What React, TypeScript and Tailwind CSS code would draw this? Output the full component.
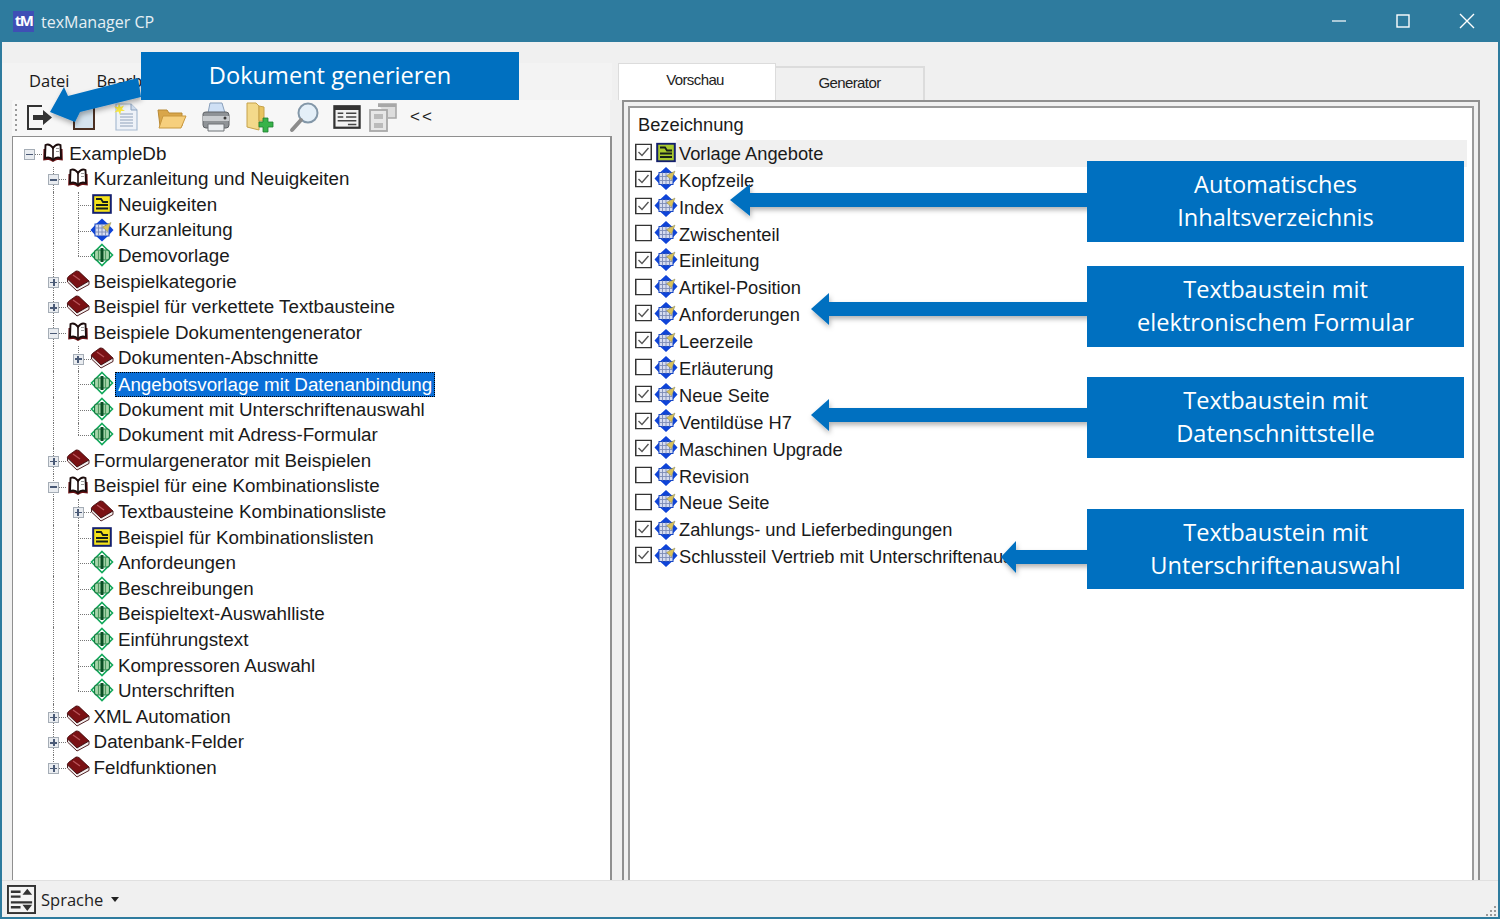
import React from "react";

const OpenBook = () => (
  <svg width="22" height="20" viewBox="0 0 22 20" className="shrink-0">
    <path d="M1.5 6 L1.2 17.5 C5 16.5 8 16.5 11 19 C14 16.5 17 16.5 20.8 17.5 L20.5 6Z" fill="#6a1215" />
    <path d="M11 5 C8.5 1.5 5.5 1 3.5 2 L3 15 C6 14 9 14.5 11 16.8 C13 14.5 16 14 19 15 L18.5 2 C16.5 1 13.5 1.5 11 5Z" fill="#fff" stroke="#1c0c0c" strokeWidth="1.9" />
    <path d="M11 5V17" stroke="#1c0c0c" strokeWidth="1.6" />
    <path d="M14 5.5H17M14 8.5H17" stroke="#9a9a9a" strokeWidth="1" />
  </svg>
);
const ClosedBook = () => (
  <svg width="24" height="22" viewBox="0 0 24 22" className="shrink-0">
    <path d="M10 1 C11 0.8 12 1 13 1.6 L23 11 L11 18 L1.5 9 C1 8 2 7 3 6Z" fill="#7a1114" stroke="#3d0a0c" strokeWidth="0.8" />
    <path d="M1.5 9 L1.5 12 L11 21 L23 14.5 L23 11 L11 18Z" fill="#f4efef" stroke="#3d0a0c" strokeWidth="0.9" />
    <path d="M7 5L14 10" stroke="#b9545a" strokeWidth="1.3" />
  </svg>
);
const YellowDoc = ({ green = false }: { green?: boolean }) => (
  <svg width="20" height="20" viewBox="0 0 20 20" className="shrink-0">
    <rect x="1.2" y="1.2" width="17.6" height="17.6" fill={green ? "#a8c92e" : "#f4e21a"} stroke="#14206e" strokeWidth="2" />
    <path d="M4 5H9L11 8H16M4 11H16M4 14.5H16" stroke="#15201a" strokeWidth="1.8" fill="none" />
  </svg>
);
const BlueDoc = () => (
  <svg width="24" height="24" viewBox="0 0 24 24" className="shrink-0">
    <path d="M12 0.5 L18 6 H6Z M12 23.5 L18 18 H6Z M0.5 12 L6 6 V18Z M23.5 12 L18 6 V18Z" fill="#0f44d8" />
    <rect x="5" y="6" width="14" height="12" fill="#d6dcf0" stroke="#1746c4" strokeWidth="1" />
    <path d="M8.5 6V18M12 6V18M15.5 6V18M5 10H19M5 14H19" stroke="#7d8bb5" strokeWidth="0.9" />
    <path d="M12.5 9 L21 4.5 L17.5 13.5Z" fill="#d9c25c" stroke="#8a8a5a" strokeWidth="0.5" />
  </svg>
);
const GreenDoc = () => (
  <svg width="24" height="24" viewBox="0 0 24 24" className="shrink-0">
    <path d="M12 1.5 L22.5 12 L12 22.5 L1.5 12Z" fill="#fff" stroke="#12a85a" strokeWidth="1.6" />
    <rect x="4.5" y="7" width="15" height="10" rx="2.5" fill="#a7d6ab" stroke="#157a40" strokeWidth="1.2" />
    <path d="M8.5 7V17M15.5 7V17" stroke="#4f9a62" strokeWidth="1.2" />
    <path d="M12 5V19" stroke="#0a4f24" strokeWidth="3" />
  </svg>
);

type Kind = "open" | "closed" | "yellow" | "blue" | "green";
type TreeNode = { t: string; d: 0 | 1 | 2; k: Kind; exp?: "+" | "-"; last?: boolean; sel?: boolean; lastOuter?: boolean };

const tree: TreeNode[] = [
  { t: "ExampleDb", d: 0, k: "open", exp: "-" },
  { t: "Kurzanleitung und Neuigkeiten", d: 1, k: "open", exp: "-" },
  { t: "Neuigkeiten", d: 2, k: "yellow" },
  { t: "Kurzanleitung", d: 2, k: "blue" },
  { t: "Demovorlage", d: 2, k: "green", last: true },
  { t: "Beispielkategorie", d: 1, k: "closed", exp: "+" },
  { t: "Beispiel für verkettete Textbausteine", d: 1, k: "closed", exp: "+" },
  { t: "Beispiele Dokumentengenerator", d: 1, k: "open", exp: "-" },
  { t: "Dokumenten-Abschnitte", d: 2, k: "closed", exp: "+" },
  { t: "Angebotsvorlage mit Datenanbindung", d: 2, k: "green", sel: true },
  { t: "Dokument mit Unterschriftenauswahl", d: 2, k: "green" },
  { t: "Dokument mit Adress-Formular", d: 2, k: "green", last: true },
  { t: "Formulargenerator mit Beispielen", d: 1, k: "closed", exp: "+" },
  { t: "Beispiel für eine Kombinationsliste", d: 1, k: "open", exp: "-" },
  { t: "Textbausteine Kombinationsliste", d: 2, k: "closed", exp: "+" },
  { t: "Beispiel für Kombinationslisten", d: 2, k: "yellow" },
  { t: "Anfordeungen", d: 2, k: "green" },
  { t: "Beschreibungen", d: 2, k: "green" },
  { t: "Beispieltext-Auswahlliste", d: 2, k: "green" },
  { t: "Einführungstext", d: 2, k: "green" },
  { t: "Kompressoren Auswahl", d: 2, k: "green" },
  { t: "Unterschriften", d: 2, k: "green", last: true },
  { t: "XML Automation", d: 1, k: "closed", exp: "+" },
  { t: "Datenbank-Felder", d: 1, k: "closed", exp: "+" },
  { t: "Feldfunktionen", d: 1, k: "closed", exp: "+", lastOuter: true },
];

const Icon = ({ k }: { k: Kind }) =>
  k === "open" ? <OpenBook /> : k === "closed" ? <ClosedBook /> : k === "yellow" ? <YellowDoc /> : k === "blue" ? <BlueDoc /> : <GreenDoc />;

const VLine = ({ half = false }: { half?: boolean }) => (
  <span className={`absolute left-1/2 top-0 w-0 border-l border-dotted border-[#777] ${half ? "h-1/2" : "h-full"}`} />
);
const HLine = () => <span className="absolute left-1/2 top-1/2 w-[13px] h-0 border-t border-dotted border-[#777]" />;

const Expander = ({ s }: { s: "+" | "-" }) => (
  <span className="absolute left-1/2 top-1/2 -ml-[5px] -mt-[5px] w-[11px] h-[11px] border border-[#a5adb6] bg-[#e9ecf0] flex items-center justify-center z-10">
    <span className="relative block w-[7px] h-[1.5px] bg-[#4a5a76]">
      {s === "+" && <span className="absolute left-[2.75px] -top-[2.75px] w-[1.5px] h-[7px] bg-[#4a5a76]" />}
    </span>
  </span>
);

const Cell = ({ children }: { children?: React.ReactNode }) => (
  <span className="relative block w-[24.3px] h-full shrink-0">{children}</span>
);

const TreeRow = ({ n }: { n: TreeNode }) => (
  <div className="flex items-center h-[25.6px]">
    {n.d === 0 && (
      <Cell>
        <HLine />
        <Expander s="-" />
      </Cell>
    )}
    {n.d === 1 && (
      <>
        <Cell />
        <Cell>
          <VLine half={n.lastOuter} />
          <HLine />
          {n.exp && <Expander s={n.exp} />}
        </Cell>
      </>
    )}
    {n.d === 2 && (
      <>
        <Cell />
        <Cell>
          <VLine />
        </Cell>
        <Cell>
          <VLine half={n.last} />
          <HLine />
          {n.exp && <Expander s={n.exp} />}
        </Cell>
      </>
    )}
    <span className="w-[24px] flex items-center justify-center shrink-0 relative z-10 -translate-y-[1px]">
      <Icon k={n.k} />
    </span>
    <span
      className={
        n.sel
          ? "ml-[1px] px-[2px] h-[25px] leading-[23px] bg-[#0a6fd8] text-white border border-dotted border-black whitespace-nowrap"
          : "ml-[4px] text-[#1a1a1a] whitespace-nowrap"
      }
    >
      {n.t}
    </span>
  </div>
);

const list: [string, boolean][] = [
  ["Kopfzeile", true],
  ["Index", true],
  ["Zwischenteil", false],
  ["Einleitung", true],
  ["Artikel-Position", false],
  ["Anforderungen", true],
  ["Leerzeile", true],
  ["Erläuterung", false],
  ["Neue Seite", true],
  ["Ventildüse H7", true],
  ["Maschinen Upgrade", true],
  ["Revision", false],
  ["Neue Seite", false],
  ["Zahlungs- und Lieferbedingungen", true],
  ["Schlussteil Vertrieb mit Unterschriftenauswahl", true],
];

const Check = ({ on }: { on: boolean }) => (
  <svg width="17" height="17" viewBox="0 0 17 17" className="shrink-0 -translate-y-[1.5px]">
    <rect x="0.75" y="0.75" width="15.5" height="15.5" fill="#fff" stroke="#333" strokeWidth="1.5" />
    {on && <path d="M3.5 8.5 L7 12 L13.5 4.5" fill="none" stroke="#555" strokeWidth="1.4" />}
  </svg>
);

const Callout = ({ className, lines }: { className: string; lines: string[] }) => (
  <div className={`absolute z-30 bg-[#0070c0] text-white flex flex-col items-center justify-center pb-[1px] text-[23.6px] leading-[33px] font-['Open_Sans',sans-serif] ${className}`}>
    {lines.map((l) => (
      <span key={l}>{l}</span>
    ))}
  </div>
);

const Arrows = () => (
  <svg width="1500" height="919" viewBox="0 0 1500 919" className="absolute left-0 top-0 z-20 pointer-events-none">
    <defs>
      <filter id="sh" x="-10%" y="-50%" width="120%" height="200%">
        <feDropShadow dx="1" dy="3" stdDeviation="2.5" floodColor="#000" floodOpacity="0.3" />
      </filter>
    </defs>
    <g fill="#0070c0" filter="url(#sh)">
      <polygon points="50,112 64,87 68,96 138,78 141,97 80,112 75,122" />
      <polygon points="730,200 750,184 750,193 1090,193 1090,207 750,207 750,216" />
      <polygon points="811,309 829,293 829,302 1090,302 1090,316 829,316 829,325" />
      <polygon points="811,415 829,399 829,408 1090,408 1090,422 829,422 829,431" />
      <polygon points="1001,557 1016,541 1016,550 1090,550 1090,564 1016,564 1016,573" />
    </g>
  </svg>
);

const ToolIcons = () => (
  <div className="flex items-center h-[36px] pb-[2px] ml-[10px] mr-[2px] rounded-tl-[3px] bg-[#f7f7f7] relative">
    <div className="ml-[3px] mr-[6px] flex flex-col gap-[3px]">
      {[0, 1, 2, 3, 4, 5].map((i) => (
        <span key={i} className="block w-[2px] h-[2px] bg-[#9a9a9a]" />
      ))}
    </div>
    <svg width="30" height="30" viewBox="0 0 30 30" className="ml-[2px] shrink-0">
      <path d="M17 4H3V27H17" fill="none" stroke="#333" strokeWidth="2" />
      <path d="M8 13H18V8L27 15.5L18 23V18H8Z" fill="#333" />
    </svg>
    <svg width="24" height="28" viewBox="0 0 24 28" className="ml-[17px] shrink-0">
      <rect x="2" y="2" width="20" height="24" fill="#d5e3ee" stroke="#4a2f22" strokeWidth="2" />
    </svg>
    <svg width="28" height="30" viewBox="0 0 28 30" className="ml-[16px] shrink-0">
      <path d="M4 2H19L25 8V28H4Z" fill="#eef2f8" stroke="#a9bcd2" strokeWidth="1.2" />
      <path d="M19 2V8H25" fill="#cfdcec" stroke="#8ca3bf" />
      <path d="M8 12H21M8 15H21M8 18H21M8 21H21M8 24H21" stroke="#8fa2ba" strokeWidth="1.2" />
      <path d="M7 1L8.5 5L12 3.5L10 7L13 9L9 9L8 13L6.5 9.5L2.5 10.5L5 7.5L2 4.5L6 5Z" fill="#f7e640" />
    </svg>
    <svg width="32" height="26" viewBox="0 0 32 26" className="ml-[16px] shrink-0">
      <path d="M2 6H11L13 9H26V22H4Z" fill="#d9a64a" stroke="#b98a35" />
      <path d="M7 12H30L25 24H3Z" fill="#f6cf7d" stroke="#c9983f" />
    </svg>
    <svg width="32" height="32" viewBox="0 0 32 32" className="ml-[12px] shrink-0">
      <path d="M10 2H22L25 12H8Z" fill="#cfe0f5" stroke="#8aa0bb" />
      <path d="M3 13Q3 11 6 11H26Q29 11 29 14V24Q29 27 26 27H6Q3 27 3 24Z" fill="#8f9397" stroke="#5e6266" />
      <path d="M3 15H29V20H3Z" fill="#c9cccf" />
      <path d="M8 23H24V30H8Z" fill="#eceff2" stroke="#6e7276" />
      <circle cx="25" cy="17" r="1.5" fill="#3a3a3a" />
    </svg>
    <svg width="32" height="32" viewBox="0 0 32 32" className="ml-[13px] shrink-0">
      <path d="M2 2H11L14 5V29L2 26Z" fill="#f3d98a" stroke="#c6a24b" />
      <path d="M14 5L19 6V20H14Z" fill="#e9c460" stroke="#c6a24b" />
      <path d="M18 17H23V21H28V26H23V31H18V26H14V21H18Z" fill="#38b34a" stroke="#1e7d30" strokeWidth="0.8" />
    </svg>
    <svg width="32" height="32" viewBox="0 0 32 32" className="ml-[11px] shrink-0">
      <circle cx="20" cy="12" r="9.5" fill="#e4eff8" stroke="#8397a8" strokeWidth="2" />
      <path d="M13 19L4 29" stroke="#8c8c8c" strokeWidth="4" strokeLinecap="round" />
    </svg>
    <svg width="28" height="26" viewBox="0 0 30 26" className="ml-[13px] shrink-0">
      <rect x="1.5" y="1.5" width="27" height="23" fill="#f2f2f2" stroke="#333" strokeWidth="2.4" />
      <rect x="2" y="2" width="26" height="3.5" fill="#333" />
      <path d="M5 9H11M14 9H25M5 13H11M14 13H25M5 17H25M16 21H25" stroke="#444" strokeWidth="1.8" />
    </svg>
    <svg width="30" height="30" viewBox="0 0 30 30" className="ml-[7px] shrink-0">
      <path d="M10 2H28V16H20" fill="#ddd" stroke="#a8a8a8" strokeWidth="1.6" />
      <rect x="10" y="2" width="18" height="3" fill="#a8a8a8" />
      <rect x="2" y="8" width="17" height="21" fill="#e7e7e7" stroke="#a8a8a8" strokeWidth="1.8" />
      <path d="M6 12H15V17H6ZM6 21H15V26H6Z" fill="#bbb" />
    </svg>
    <span className="ml-[12px] text-[17px] tracking-[2px] text-[#222] font-['Liberation_Sans',sans-serif]">&lt;&lt;</span>
  </div>
);

export default function App() {
  return (
    <div className="relative w-[1500px] h-[919px] overflow-hidden flex flex-col bg-[#f0f0f0] border-x-2 border-b-2 border-[#2e7b9e] font-['Liberation_Sans',sans-serif]">
      <div className="h-[42px] -mx-[2px] bg-[#2e7b9e] flex items-center shrink-0 text-[#e6eff4] font-['Open_Sans',sans-serif] text-[16px]">
        <span className="ml-[13px] w-[21px] h-[21px] bg-[#3f4fb5] text-white text-[15px] font-bold leading-[18px] tracking-[-1.5px] text-center">tM</span>
        <span className="ml-[7px] pt-[1px]">texManager CP</span>
        <div className="ml-auto flex items-center">
          <svg width="14" height="14" viewBox="0 0 14 14" className="mr-[50px]"><path d="M0 7H14" stroke="#fff" strokeWidth="1.2" /></svg>
          <svg width="14" height="14" viewBox="0 0 14 14" className="mr-[49px]"><rect x="1" y="1" width="12" height="12" fill="none" stroke="#fff" strokeWidth="1.4" /></svg>
          <svg width="16" height="16" viewBox="0 0 16 16" className="mr-[25px]"><path d="M1 1L15 15M15 1L1 15" stroke="#fff" strokeWidth="1.4" /></svg>
        </div>
      </div>

      <div className="flex flex-1 min-h-0">
        <div className="w-[610px] shrink-0 flex flex-col">
          <div className="mt-[21px] h-[37px] flex items-center bg-[#f3f3f3] text-[16.5px] text-[#1a1a1a] font-['Open_Sans',sans-serif]">
            <span className="ml-[27px]">Datei</span>
            <span className="ml-[27px]">Bearbeiten</span>
          </div>
          <ToolIcons />
          <div className="flex-1 ml-[10px] bg-white border-l border-t border-r-2 border-[#8f8f8f] pt-[4px] pl-[4px] text-[18.8px] overflow-hidden">
            {tree.map((n, i) => (
              <TreeRow key={i} n={n} />
            ))}
          </div>
        </div>

        <div className="flex-1 flex flex-col ml-[6px] min-w-0">
          <div className="mt-[21px] h-[37px] flex items-end shrink-0 text-[15px] tracking-[-0.6px] text-[#222]">
            <div className="w-[158px] h-[37px] bg-white border-t border-x border-[#dcdcdc] flex items-center justify-center pb-[4px] pr-[4px] relative z-10">Vorschau</div>
            <div className="w-[149px] h-[34px] bg-[#f0f0f0] border-t-2 border-r-2 border-[#dcdcdc] flex items-center justify-center pb-[1px]">Generator</div>
          </div>
          <div className="flex-1 ml-[4px] mr-[18px] min-h-0 border-t-2 border-x-2 border-[#8f8f8f] pt-[4px] px-[4px] bg-[#f0f0f0]">
            <div className="h-full bg-white border-t-2 border-x-2 border-[#9a9a9a] text-[18.3px] text-[#1a1a1a] pr-[5px]">
              <div className="h-[32px] flex items-center pl-[8px] pt-[2px]">Bezeichnung</div>
              <div className="h-[27px] flex items-center pl-[5px]">
                <Check on />
                <span className="ml-[4px] -translate-y-[1.5px]"><YellowDoc green /></span>
                <span className="flex-1 h-full bg-[#f0f0f0] pl-[2px] flex items-center">
                  <span className="ml-[1px]">Vorlage Angebote</span>
                </span>
              </div>
              {list.map(([t, on], i) => (
                <div key={i} className="h-[26.9px] flex items-center pl-[5px]">
                  <Check on={on} />
                  <span className="ml-[2px] -translate-y-[1.5px]"><BlueDoc /></span>
                  <span className="ml-[1px] whitespace-nowrap">{t}</span>
                </div>
              ))}
            </div>
          </div>
        </div>
      </div>

      <div className="h-[37px] shrink-0 border-t border-[#e0e0e0] bg-[#f0f0f0] flex items-center relative text-[16.5px] text-[#222] font-['Open_Sans',sans-serif]">
        <svg width="29" height="29" viewBox="0 0 30 30" className="ml-[5px]">
          <rect x="1" y="1" width="28" height="28" fill="#f4f4f4" stroke="#333" strokeWidth="2" />
          <path d="M4 7H14M4 12H14M4 18H26M4 23H14" stroke="#333" strokeWidth="2.4" />
          <path d="M21 4L26 10H16Z M21 27L26 20.5H16Z" fill="#333" />
        </svg>
        <span className="ml-[5px] pt-[2px]">Sprache</span>
        <svg width="8" height="5" viewBox="0 0 8 5" className="ml-[8px]"><path d="M0 0H8L4 5Z" fill="#222" /></svg>
        <div className="absolute right-[2px] bottom-[1px] grid grid-cols-3 gap-[2px]">
          {[0, 0, 1, 0, 1, 1, 1, 1, 1].map((v, i) => (
            <span key={i} className={v ? "block w-[2px] h-[2px] bg-[#999]" : "block w-[2px] h-[2px]"} />
          ))}
        </div>
      </div>

      <div className="absolute -left-[2px] top-0 w-[1500px] h-[919px] pointer-events-none">
        <Arrows />
        <Callout className="left-[141px] top-[52px] w-[378px] h-[48px]" lines={["Dokument generieren"]} />
        <Callout className="left-[1087px] top-[161px] w-[377px] h-[81px]" lines={["Automatisches", "Inhaltsverzeichnis"]} />
        <Callout className="left-[1087px] top-[266px] w-[377px] h-[81px]" lines={["Textbaustein mit", "elektronischem Formular"]} />
        <Callout className="left-[1087px] top-[377px] w-[377px] h-[81px]" lines={["Textbaustein mit", "Datenschnittstelle"]} />
        <Callout className="left-[1087px] top-[509px] w-[377px] h-[80px]" lines={["Textbaustein mit", "Unterschriftenauswahl"]} />
      </div>
    </div>
  );
}
